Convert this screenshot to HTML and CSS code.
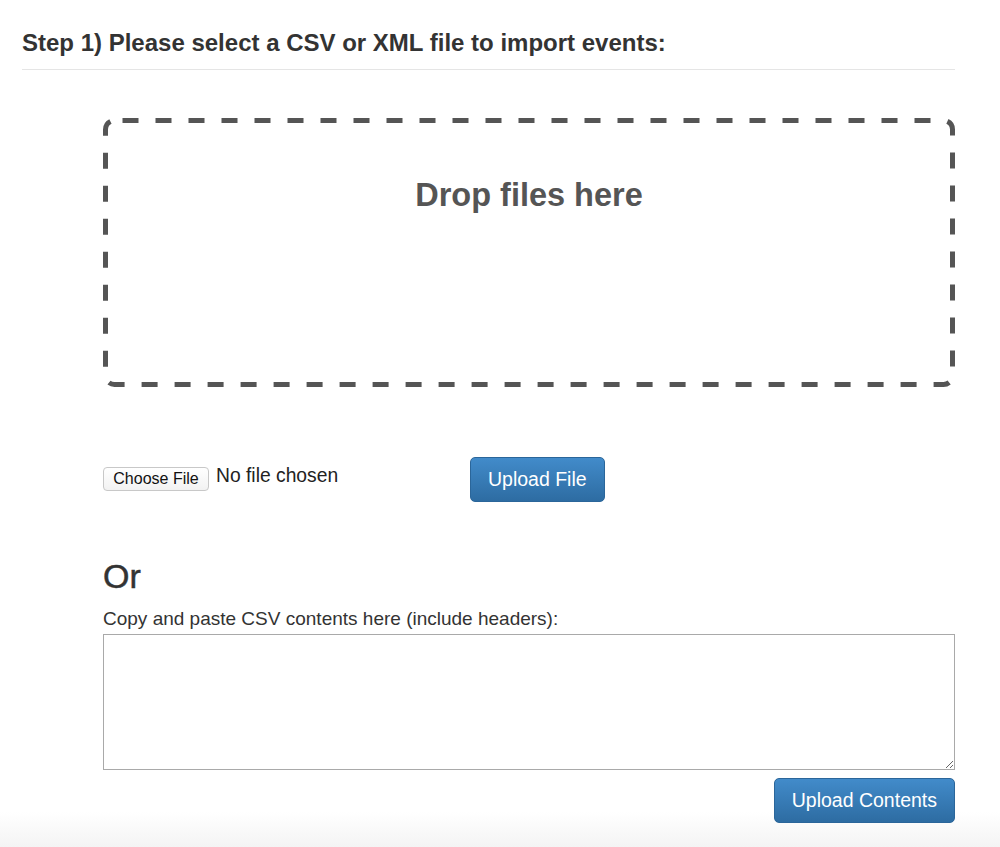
FILE: index.html
```html
<!DOCTYPE html>
<html lang="en">

<head>
  <meta charset="UTF-8">
  <meta name="viewport" content="width=device-width, initial-scale=1.0">
  <title>Import Events</title>
  <link rel="stylesheet" href="styles.css">
</head>

<body>
  <div class="main-container">
    <h3 class="step-title">Step 1) Please select a CSV or XML file to import events:</h3>
    <div class="import-body">
      <div class="drop-zone">
        <svg class="drop-border" width="852" height="269" viewBox="0 0 852 269">
          <rect x="2.5" y="2.5" width="847" height="264" rx="9" ry="9" />
        </svg>
        <p class="drop-text">Drop files here</p>
      </div>
      <div class="row file-row">
        <div class="file-picker">
          <button class="choose-button">Choose File</button>
          <span class="file-name">No file chosen</span>
        </div>
        <button class="primary-button">Upload File</button>
      </div>
      <h3 class="or-title">Or</h3>
      <label class="paste-label" for="csvContents">Copy and paste CSV contents here (include headers):</label>
      <textarea class="paste-area" id="csvContents"></textarea>
      <div class="row submit-row">
        <button class="primary-button">Upload Contents</button>
      </div>
    </div>
  </div>
</body>

</html>
```

FILE: styles.css
```css
html {
  min-height: 100%;
  background: linear-gradient(to bottom, #fff 0, #fff 812px, #f4f4f4 847px);
}

body {
  margin: 0;
  font-family: "Liberation Sans", Arial, sans-serif;
  color: #333;
}

.main-container {
  width: 933px;
  margin-left: 22px;
  padding-top: 30px;
}

.step-title {
  margin: 0;
  padding-bottom: 12.5px;
  font-size: 24px;
  line-height: 1.1;
  font-weight: bold;
  border-bottom: 1px solid #e5e5e5;
}

.import-body {
  margin-left: 81px;
}

.drop-zone {
  position: relative;
  margin-top: 48px;
  height: 269px;
}

/* dashed outline drawn over the box so the dash length can be set */
.drop-border {
  position: absolute;
  left: 0;
  top: 0;
}

.drop-border rect {
  fill: none;
  stroke: #555;
  stroke-width: 5;
  stroke-dasharray: 16 17;
  stroke-dashoffset: -8;
}

.drop-text {
  margin: 0;
  padding-top: 59px;
  text-align: center;
  font-size: 32.5px;
  line-height: 36px;
  font-weight: bold;
  color: #555;
}

.row {
  display: flex;
  flex-direction: row;
  align-items: center;
}

.file-row {
  margin-top: 70px;
}

.file-picker {
  width: 367px;
  display: flex;
  align-items: center;
}

.choose-button {
  width: 106px;
  height: 24px;
  padding: 0;
  font-family: "Liberation Sans", Arial, sans-serif;
  font-size: 16px;
  color: #111;
  background: linear-gradient(to bottom, #fff, #f2f2f2);
  border: 1px solid #c8c8c8;
  border-radius: 4px;
}

.file-name {
  margin-left: 7px;
  margin-top: -6px;
  font-size: 19.3px;
  color: #222;
}

.primary-button {
  height: 45px;
  padding: 0 17px;
  font-family: "Liberation Sans", Arial, sans-serif;
  font-size: 19.5px;
  color: #fff;
  background: linear-gradient(to bottom, #428bca, #2d6ca2);
  border: 1px solid #2b669a;
  border-radius: 5px;
}

.or-title {
  margin: 56px 0 0 0;
  font-size: 34px;
  line-height: 36px;
  font-weight: normal;
  -webkit-text-stroke: 0.5px #333;
}

.paste-label {
  display: block;
  margin-top: 14px;
  font-size: 19px;
  line-height: 22px;
}

.paste-area {
  display: block;
  box-sizing: border-box;
  width: 852px;
  height: 136px;
  margin: 4px 0 0 0;
  border: 1px solid #a9a9a9;
}

.submit-row {
  margin-top: 8px;
  justify-content: flex-end;
}
```
